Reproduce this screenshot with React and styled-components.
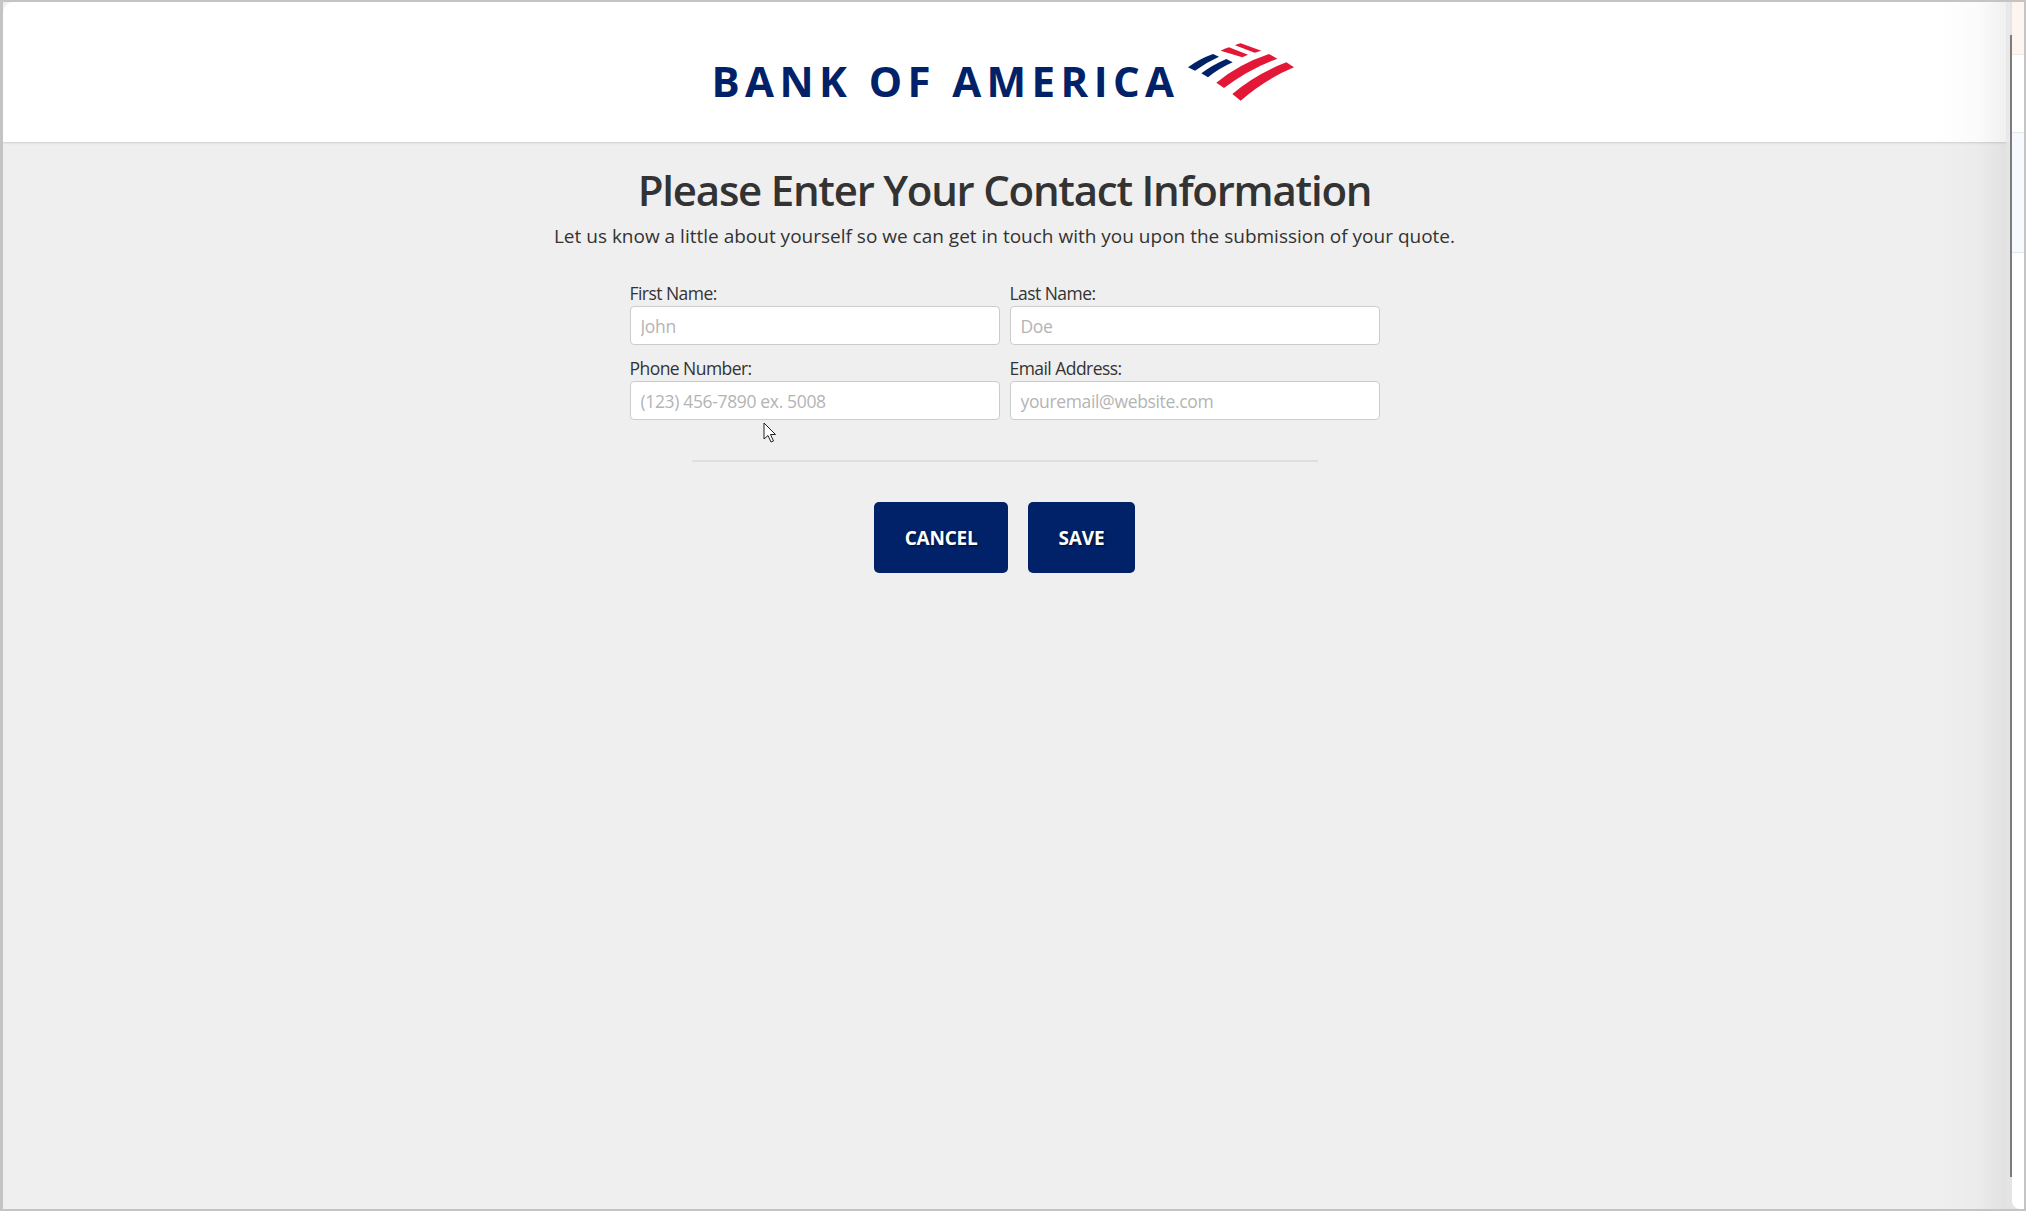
import React from 'react';
import styled, { createGlobalStyle } from 'styled-components';

const GlobalStyle = createGlobalStyle`
  html, body {
    margin: 0;
    padding: 0;
    background: #fff;
  }
  * {
    box-sizing: border-box;
  }
`;

const Window = styled.div`
  display: flex;
  position: relative;
  width: 2026px;
  height: 1211px;
  overflow: hidden;
  background: #e4e4e4;
  border: solid #c4c4c4;
  border-width: 2px 2px 2px 3px;
  font-family: "Open Sans", "Noto Sans", sans-serif;
  color: #333;
`;

const Main = styled.main`
  position: relative;
  display: flex;
  flex-direction: column;
  width: 2003px;
  background: #efefef;
`;

const Header = styled.header`
  display: flex;
  justify-content: center;
  align-items: flex-start;
  height: 141px;
  padding: 41px 4px 0 0;
  background: #fff;
  border-bottom: 1px solid #d8d8d8;
  border-top-left-radius: 10px;
  box-shadow: 0 1px 2px rgba(0, 0, 0, 0.06);
`;

const Logo = styled.div`
  display: flex;
  align-items: flex-start;
  gap: 8px;
`;

const LogoText = styled.span`
  margin-top: 14px;
  font-family: "Open Sans", sans-serif;
  font-size: 42px;
  line-height: 48px;
  font-weight: 700;
  letter-spacing: 5.4px;
  white-space: nowrap;
  color: #012169;
`;

const Content = styled.div`
  display: flex;
  flex-direction: column;
  align-items: center;
`;

const Title = styled.h1`
  margin: 17px 0 0;
  font-size: 42px;
  line-height: 59px;
  font-weight: 600;
  letter-spacing: -1.25px;
  color: #333;
`;

const Subtitle = styled.p`
  margin: 3px 0 0;
  font-size: 19px;
  line-height: 28px;
`;

const Form = styled.form`
  display: grid;
  grid-template-columns: 370px 370px;
  column-gap: 10px;
  row-gap: 11px;
  margin-top: 31px;
`;

const Field = styled.label`
  display: flex;
  flex-direction: column;
  font-size: 17.5px;
  line-height: 25px;
  letter-spacing: -0.55px;
`;

const Input = styled.input`
  width: 100%;
  height: 39px;
  padding: 0 10px;
  background: #fff;
  border: 1px solid #ccc;
  border-radius: 4px;
  font-family: inherit;
  font-size: 17.5px;
  letter-spacing: -0.35px;
  color: #333;

  &::placeholder {
    color: #b4b4b4;
    opacity: 1;
  }
`;

const Divider = styled.hr`
  width: 626px;
  height: 2px;
  margin: 40px 0 0;
  border: 0;
  background: #dfdfdf;
`;

const Actions = styled.div`
  display: flex;
  gap: 20px;
  margin-top: 40px;
`;

const Button = styled.button`
  height: 71px;
  padding: 0 30.5px;
  background: #012169;
  border: 0;
  border-radius: 5px;
  font-family: inherit;
  font-size: 19px;
  font-weight: 700;
  letter-spacing: -0.2px;
  color: #fff;
  text-shadow: 1px 1px 2px rgba(0, 0, 0, 0.6);
`;

const EdgeShade = styled.div`
  position: absolute;
  top: 0;
  right: 0;
  bottom: 0;
  width: 70px;
  background: linear-gradient(to right, rgba(0, 0, 0, 0), rgba(0, 0, 0, 0.015) 60%, rgba(0, 0, 0, 0.06));
  pointer-events: none;
`;

const Cursor = styled.svg`
  position: absolute;
  left: 760px;
  top: 420px;
`;

const Gutter = styled.div`
  display: flex;
  flex-direction: column;
  width: 4px;
`;

const GutterTop = styled.div`
  height: 140px;
  background: #e9e9e9;
`;

const Rail = styled.div`
  width: 2px;
  margin: 33px 0 32px;
  background: #7c7c7c;
`;

const Side = styled.aside`
  display: flex;
  flex-direction: column;
  flex: 1;
  background: #fff;
  border-bottom-left-radius: 8px;
`;

const SideBlock = styled.div`
  height: ${({ $height }) => $height}px;
  background: ${({ $color }) => $color};
  border-bottom: 1px solid ${({ $line }) => $line};
`;

const BankFlag = () => (
  <svg width="106" height="58" viewBox="82 38 318 172" aria-hidden="true">
    <path d="M82 110 Q115 85 157 70 L175 78 Q135 96 103 120 Z" fill="#012169" />
    <path d="M122 128 Q155 103 197 85 L216 95 Q175 113 142 140 Z" fill="#012169" />
    <path d="M180 60 Q192 54 205 50 L262 72 L245 80 Z" fill="#e31837" />
    <path d="M223 44 Q231 40 240 38 L302 60 L282 66 Z" fill="#e31837" />
    <path d="M167 156 Q235 100 325 70 L350 84 Q265 115 190 172 Z" fill="#e31837" />
    <path d="M215 190 Q285 130 377 95 L400 110 Q315 145 240 210 Z" fill="#e31837" />
  </svg>
);

const App = () => {
  return (
    <>
      <GlobalStyle />
      <Window>
        <Main>
          <Header>
            <Logo>
              <LogoText>BANK OF AMERICA</LogoText>
              <BankFlag />
            </Logo>
          </Header>
          <Content>
            <Title>Please Enter Your Contact Information</Title>
            <Subtitle>Let us know a little about yourself so we can get in touch with you upon the submission of your quote.</Subtitle>
            <Form>
              <Field>
                First Name:
                <Input placeholder="John" />
              </Field>
              <Field>
                Last Name:
                <Input placeholder="Doe" />
              </Field>
              <Field>
                Phone Number:
                <Input placeholder="(123) 456-7890 ex. 5008" />
              </Field>
              <Field>
                Email Address:
                <Input placeholder="youremail@website.com" />
              </Field>
            </Form>
            <Divider />
            <Actions>
              <Button type="button">CANCEL</Button>
              <Button type="button">SAVE</Button>
            </Actions>
          </Content>
          <EdgeShade />
          <Cursor width="14" height="22" viewBox="0 0 14 22" aria-hidden="true">
            <path d="M1 1 L1 17 L5 13.5 L8 20 L10.5 19 L7.5 12.5 L12.5 12.5 Z" fill="#fff" stroke="#222" strokeWidth="1" />
          </Cursor>
        </Main>
        <Gutter>
          <GutterTop />
        </Gutter>
        <Rail />
        <Side>
          <SideBlock $height={53} $color="#fff5f0" $line="#f5e6df" />
          <SideBlock $height={78} $color="#fff" $line="#e8e8e8" />
          <SideBlock $height={120} $color="#f6faff" $line="#e6e6e6" />
        </Side>
      </Window>
    </>
  );
};

export default App;
